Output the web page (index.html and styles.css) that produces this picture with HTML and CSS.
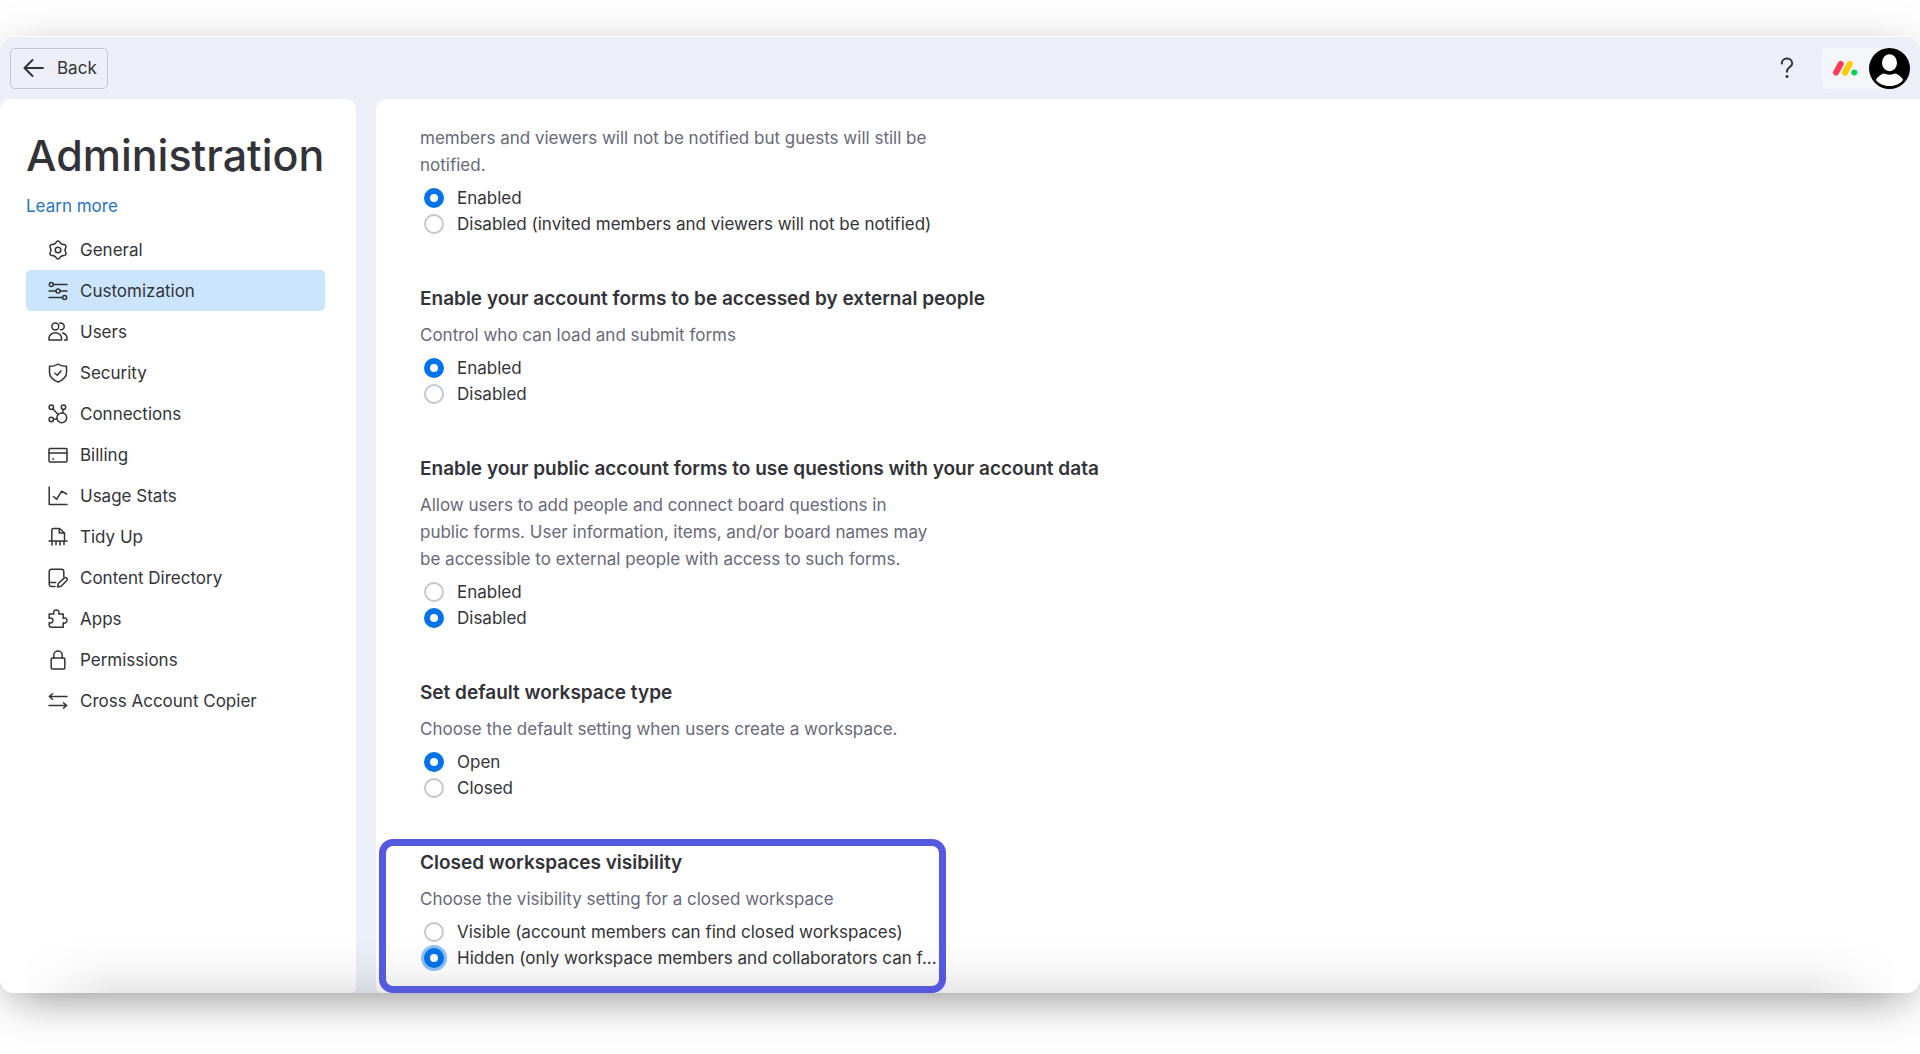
FILE: index.html
```html
<!DOCTYPE html>
<html lang="en">
<head>
  <meta charset="utf-8">
  <meta name="viewport" content="width=device-width, initial-scale=1">
  <title>Administration</title>
  <link rel="stylesheet" href="styles.css">
</head>
<body>
  <div class="window">
    <header class="topbar">
      <button class="back" type="button">
        <svg class="back-icon" viewBox="0 0 22 20" aria-hidden="true"><path d="M20 10H2M9.500 2 1.500 10l8 8"/></svg>
        Back
      </button>
      <div class="topbar-actions">
        <button class="help" type="button" aria-label="Help">
          <svg viewBox="0 0 14 22" aria-hidden="true"><path d="M1.800 6.500C1.800 3.500 4 1.500 7 1.500s5.200 2 5.200 4.900C12.200 10 7 10.200 7 14.300v.5"/><circle cx="7" cy="19.500" r="1.500"/></svg>
        </button>
        <div class="profile">
          <button class="product" type="button" aria-label="Products">
            <svg viewBox="0 0 26 16" aria-hidden="true">
              <path d="M4 12.500 8.700 4" stroke="#ff3d57"/>
              <path d="M13 12.500 17.700 4" stroke="#ffcb00"/>
              <circle cx="22.300" cy="12.500" r="3" fill="#00d647"/>
            </svg>
          </button>
          <button class="avatar" type="button" aria-label="Profile">
            <svg viewBox="0 0 42 42" aria-hidden="true">
              <circle cx="21" cy="21" r="21"/>
              <ellipse cx="21" cy="15" rx="7.700" ry="8.700" fill="#fff"/>
              <path d="M7 32.500c2-3.300 5.500-5.500 8-6.300 3.500 1.500 8.500 1.500 12 0 2.500.8 6 3 8 6.300-3 4-8.200 6.500-14 6.500S10 36.500 7 32.500z" fill="#fff"/>
            </svg>
          </button>
        </div>
      </div>
    </header>

    <div class="panels">
      <aside class="sidebar">
        <h1 class="title">Administration</h1>
        <a class="learn" href="#">Learn more</a>
        <nav class="menu" aria-label="Administration">
          <a class="item" href="#"><svg viewBox="0 0 20 20" aria-hidden="true"><path id="tooth" d="M6.400 3.800Q7.700 3.100 8.100 2.300 8.600 1 10 1t1.900 1.300Q12.300 3.100 13.600 3.800"/><use href="#tooth" transform="rotate(60 10 10)"/><use href="#tooth" transform="rotate(120 10 10)"/><use href="#tooth" transform="rotate(180 10 10)"/><use href="#tooth" transform="rotate(240 10 10)"/><use href="#tooth" transform="rotate(300 10 10)"/><circle cx="10" cy="10" r="2.800"/></svg>General</a>
          <a class="item active" href="#" aria-current="page"><svg viewBox="0 0 20 20" aria-hidden="true"><circle cx="3.300" cy="3.500" r="2"/><path d="M5.300 3.500H19M1 10h7M12 10h7M1 16.500h13.500"/><circle cx="10" cy="10" r="2"/><circle cx="16.600" cy="16.500" r="2"/></svg>Customization</a>
          <a class="item" href="#"><svg viewBox="0 0 20 20" aria-hidden="true"><circle cx="7.300" cy="4.500" r="3.400"/><path d="M1 18v-1.500c0-3.300 2.800-5.800 6.300-5.800s6.300 2.500 6.300 5.800V18zM11.800 1.200a3.400 3.400 0 1 1 .5 6.600M14.500 10.900c2.700.6 4.500 2.700 4.500 5.600V18h-2.500"/></svg>Users</a>
          <a class="item" href="#"><svg viewBox="0 0 20 20" aria-hidden="true"><path d="M10 1c2 1.600 5 2.300 8.500 2.300v6.200c0 4.500-3.500 7.500-8.500 9.500-5-2-8.500-5-8.500-9.500V3.300C5 3.300 8 2.600 10 1zM7 10.300l2.300 2 3.700-4.300"/></svg>Security</a>
          <a class="item" href="#"><svg viewBox="0 0 20 20" aria-hidden="true"><circle cx="3.300" cy="3.300" r="2.200"/><circle cx="15.500" cy="3.300" r="2.200"/><circle cx="3.300" cy="15.500" r="2.200"/><circle cx="13.800" cy="13.800" r="4.900"/><path d="m5 5 5.200 5.400M15.200 5.500l-.5 3.400M5.500 15.200l3.400-.5"/></svg>Connections</a>
          <a class="item" href="#"><svg viewBox="0 0 20 20" aria-hidden="true"><rect x="1" y="3.500" width="18" height="13.500" rx="1"/><path d="M1 8h18M4.800 14h.8"/></svg>Billing</a>
          <a class="item" href="#"><svg viewBox="0 0 20 20" aria-hidden="true"><path d="M1.200 1v17.500H19M5.500 10.500l3.200 2.700 5-8L18.500 8"/></svg>Usage Stats</a>
          <a class="item" href="#"><svg viewBox="0 0 20 20" aria-hidden="true"><path d="M3.800 13V3a1.500 1.500 0 0 1 1.500-1.500h6.200L16.500 6v7M11.300 1.500V6h5M1 14h18M4 14.500V18M8 14.500v3M12 14.500V18M16 14.500v3"/></svg>Tidy Up</a>
          <a class="item" href="#"><svg viewBox="0 0 20 20" aria-hidden="true"><path d="M7 18.500H3.500A2.300 2.300 0 0 1 1.200 16V3.500a2.300 2.300 0 0 1 2.300-2.300h10a2.300 2.300 0 0 1 2.300 2.300v5M1.200 14.500h6.500M9.500 19l.8-3.500 6-5.600c1.600-1.200 3.700.7 2.500 2.500l-5.700 5.900z"/></svg>Content Directory</a>
          <a class="item" href="#"><svg viewBox="0 0 20 20" aria-hidden="true"><path d="M1.200 5h4.600C5 2.700 6.300 1 8.300 1s3.300 1.700 2.500 4h4.400v4.200c2.200-.7 3.800.4 3.800 2.300s-1.600 3-3.800 2.300v4.400H3.500A2.300 2.300 0 0 1 1.200 16v-2.300c2.300.6 3.800-.4 3.800-2.200s-1.500-2.800-3.800-2.200z"/></svg>Apps</a>
          <a class="item" href="#"><svg viewBox="0 0 20 20" aria-hidden="true"><rect x="3.200" y="8" width="13.600" height="11" rx="1"/><path d="M5.800 8V5.300a4.200 4.200 0 0 1 8.400 0V8"/></svg>Permissions</a>
          <a class="item" href="#"><svg viewBox="0 0 20 20" aria-hidden="true"><path d="M19 5.500H1.500M4.500 2.800 1.300 5.500l3.200 2.700M1 14.500h17.500M15.500 11.800l3.200 2.700-3.200 2.700"/></svg>Cross Account Copier</a>
        </nav>
      </aside>

      <main class="content">
        <section class="setting" aria-label="Invitation notifications">
          <p class="desc">members and viewers will not be notified but guests will still be<br>notified.</p>
          <label class="option"><input type="radio" name="invite" checked>Enabled</label>
          <label class="option"><input type="radio" name="invite">Disabled (invited members and viewers will not be notified)</label>
        </section>
        <section class="setting">
          <h2 class="heading">Enable your account forms to be accessed by external people</h2>
          <p class="desc">Control who can load and submit forms</p>
          <label class="option"><input type="radio" name="forms" checked>Enabled</label>
          <label class="option"><input type="radio" name="forms">Disabled</label>
        </section>
        <section class="setting">
          <h2 class="heading">Enable your public account forms to use questions with your account data</h2>
          <p class="desc">Allow users to add people and connect board questions in<br>public forms. User information, items, and/or board names may<br>be accessible to external people with access to such forms.</p>
          <label class="option"><input type="radio" name="public">Enabled</label>
          <label class="option"><input type="radio" name="public" checked>Disabled</label>
        </section>
        <section class="setting">
          <h2 class="heading">Set default workspace type</h2>
          <p class="desc">Choose the default setting when users create a workspace.</p>
          <label class="option"><input type="radio" name="workspace" checked>Open</label>
          <label class="option"><input type="radio" name="workspace">Closed</label>
        </section>
        <section class="setting highlighted">
          <h2 class="heading">Closed workspaces visibility</h2>
          <p class="desc">Choose the visibility setting for a closed workspace</p>
          <label class="option"><input type="radio" name="visibility">Visible (account members can find closed workspaces)</label>
          <label class="option"><input class="focused" type="radio" name="visibility" checked>Hidden (only workspace members and collaborators can f...</label>
        </section>
      </main>
    </div>
  </div>
</body>
</html>
```
FILE: styles.css
```css
*,
*::after {
  box-sizing: border-box;
}

body {
  margin: 0;
  padding: 36px 0 62px;
  min-height: 100vh;
  display: flex;
  overflow-x: hidden;
  background: #fff;
  color: #323338;
  font: 17px/26px Inter, "Liberation Sans", sans-serif;
}

button {
  padding: 0;
  border: 0;
  background: none;
  color: inherit;
  font: inherit;
}

h1, h2, p {
  margin: 0;
}

svg {
  display: block;
  fill: none;
  stroke-linecap: round;
  stroke-linejoin: round;
}

.window {
  position: relative;
  flex: 1;
  display: flex;
  flex-direction: column;
  border-top: 1px solid #fff;
  border-radius: 14px;
  background: #eceef8;
  box-shadow: 0 12px 50px -12px rgba(0, 0, 0, .52);
}

/* soft shade along the bottom edge of the window */
.window::after {
  content: "";
  position: absolute;
  inset: auto 0 0;
  height: 54px;
  border-radius: 0 0 14px 14px;
  background: linear-gradient(to top, rgba(0, 0, 0, .09), rgba(0, 0, 0, .03) 45%, transparent);
  mask-image: linear-gradient(to right, transparent 20px, #000 110px, #000 calc(100% - 110px), transparent calc(100% - 20px));
  pointer-events: none;
}

.topbar {
  display: flex;
  align-items: center;
  justify-content: space-between;
  height: 62px;
  padding: 0 10px;
}

.back {
  display: flex;
  align-items: center;
  gap: 12px;
  height: 41px;
  padding: 0 10px 0 12px;
  border: 1px solid #c3c6d4;
  border-radius: 5px;
}

.back-icon {
  width: 22px;
  height: 20px;
  stroke: #323338;
  stroke-width: 2;
}

.topbar-actions {
  display: flex;
  align-items: center;
  gap: 28px;
}

.help svg {
  width: 14px;
  height: 22px;
  stroke: #323338;
  stroke-width: 2;
}

.help circle {
  fill: #323338;
  stroke: none;
}

.profile {
  display: flex;
}

.product {
  width: 68px;
  height: 41px;
  padding-left: 10px;
  border-radius: 5px;
  background: #f5f6fa;
}

.product svg {
  width: 26px;
  height: 16px;
  stroke-width: 6;
}

.product circle {
  stroke: none;
}

.avatar {
  margin-left: -21px;
}

.avatar svg {
  width: 41px;
  height: 41px;
  fill: #000;
}

.panels {
  flex: 1;
  display: flex;
  gap: 20px;
}

.sidebar {
  width: 356px;
  flex: none;
  padding: 28px 31px 40px 26px;
  border-radius: 10px 10px 6px 14px;
  background: #fff;
}

.title {
  font-size: 43px;
  font-weight: 500;
  line-height: 56px;
}

.learn {
  display: inline-block;
  margin: 10px 0;
  color: #1f76c2;
  text-decoration: none;
}

.item {
  display: flex;
  align-items: center;
  gap: 12px;
  height: 41px;
  padding-left: 22px;
  border-radius: 5px;
  color: inherit;
  text-decoration: none;
}

.item.active {
  background: #cce5ff;
}

.item svg {
  width: 20px;
  height: 20px;
  stroke: #323338;
  stroke-width: 1.5;
}

.content {
  flex: 1;
  min-width: 0;
  display: flex;
  flex-direction: column;
  gap: 49px;
  padding: 26px 44px 22px;
  border-radius: 10px 0 14px 6px;
  background: #fff;
}

.heading {
  margin-bottom: 10px;
  font-size: 19px;
  font-weight: 600;
  line-height: 26px;
}

.desc {
  margin-bottom: 6px;
  color: #676879;
  line-height: 27px;
}

.option {
  display: flex;
  align-items: center;
  gap: 13px;
  width: max-content;
  padding-left: 4px;
}

.option input {
  appearance: none;
  width: 20px;
  height: 20px;
  margin: 0;
  border: 2px solid #c3c6d4;
  border-radius: 50%;
  background: #fff;
}

.option input:checked {
  border: 6px solid #0073ea;
}

.option .focused {
  box-shadow: 0 0 0 3px #8fc0f8;
}

.highlighted {
  position: relative;
}

.highlighted::after {
  content: "";
  position: absolute;
  z-index: 1;
  top: -11px;
  bottom: -22px;
  left: -41px;
  width: 567px;
  border: 7px solid #5559df;
  border-radius: 14px;
  pointer-events: none;
}
```
